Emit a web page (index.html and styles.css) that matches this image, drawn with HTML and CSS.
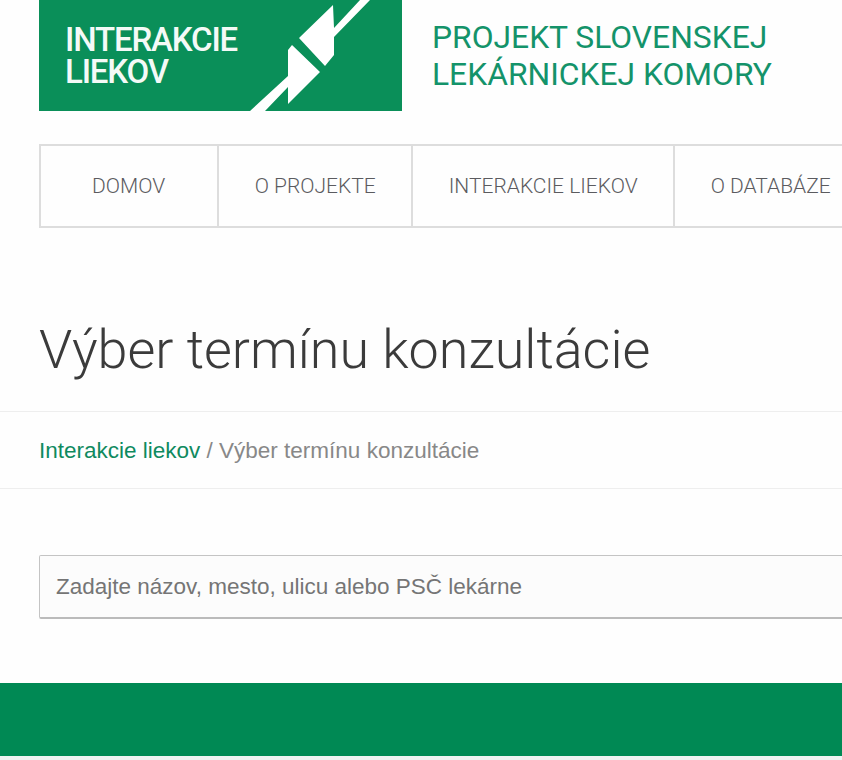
FILE: index.html
```html
<!DOCTYPE html>
<html lang="en">
<head>
  <meta charset="UTF-8">
  <meta name="viewport" content="width=device-width, initial-scale=1.0">
  <title>Výber termínu konzultácie</title>
  <link rel="stylesheet" href="styles.css">
</head>
<body>

  <!-- Header -->
  <header class="site-header">
    <a class="logo" href="#">
      <span class="logo-text">INTERAKCIE<br>LIEKOV</span>
      <svg class="logo-plug" viewBox="0 0 122 111" width="122" height="111">
        <path fill="#fff" d="M49 38 L83 5 L84 28 L110 0 L120 0 L84 37 L84 55 L75 66 Z"/>
        <path fill="#fff" d="M42 45 L70 72 L38 104 L38 87 L15 111 L0 111 L38 76 L38 50 Z"/>
      </svg>
    </a>
    <div class="tagline">PROJEKT SLOVENSKEJ<br>LEKÁRNICKEJ KOMORY</div>
  </header>

  <!-- Main Menu -->
  <nav class="main-nav">
    <a class="home-link" href="#">DOMOV</a>
    <a href="#">O PROJEKTE</a>
    <a href="#">INTERAKCIE LIEKOV</a>
    <a href="#">O DATABÁZE</a>
  </nav>

  <h1 class="page-title">Výber termínu konzultácie</h1>

  <!-- Breadcrumb -->
  <div class="breadcrumb">
    <a href="#">Interakcie liekov</a> / Výber termínu konzultácie
  </div>

  <!-- Search -->
  <form class="search-form">
    <input type="text" placeholder="Zadajte názov, mesto, ulicu alebo PSČ lekárne">
  </form>

  <div class="green-band"></div>
  <div class="page-end"></div>

</body>
</html>
```

FILE: styles.css
```css
/* Global Styles */
html,
body {
  overflow: hidden;
}

body {
  margin: 0;
  padding: 0;
  width: 842px;
  height: 760px;
  background-color: #fefefe;
  font-family: 'Roboto', sans-serif;
  color: #3b3b3b;
}

/* Header */
.site-header {
  display: flex;
  padding-left: 39px;
  height: 144px;
}

.logo {
  display: flex;
  box-sizing: border-box;
  width: 363px;
  height: 111px;
  padding: 0 30px 0 26px;
  justify-content: space-between;
  background-color: #0a8f59;
  color: #f4faf7;
  text-decoration: none;
}

.logo-text {
  margin-top: 24px;
  font-size: 33px;
  font-weight: 500;
  line-height: 32px;
  letter-spacing: -1.15px;
}

.logo-plug {
  flex-shrink: 0;
}

.tagline {
  margin: 19px 0 0 30px;
  color: #14936a;
  font-size: 31.8px;
  line-height: 37px;
  white-space: nowrap;
}

/* Main Menu */
.main-nav {
  display: flex;
  margin-left: 39px;
  width: 1000px;
  height: 84px;
  box-sizing: border-box;
  border-top: 2px solid #dddddd;
  border-bottom: 2px solid #dddddd;
  border-left: 2px solid #dddddd;
}

.main-nav a {
  display: flex;
  align-items: center;
  padding: 0 35.5px;
  border-right: 2px solid #dddddd;
  color: #5b5b5f;
  font-size: 21px;
  font-weight: 300;
  text-decoration: none;
  white-space: nowrap;
}

.main-nav .home-link {
  padding: 0 52px 0 51px;
}

/* Title */
.page-title {
  margin: 84px 0 24px 39px;
  font-size: 53.9px;
  font-weight: 300;
  line-height: 75px;
  white-space: nowrap;
}

/* Breadcrumb */
.breadcrumb {
  height: 76px;
  padding-left: 39px;
  border-top: 1px solid #eeeeee;
  border-bottom: 1px solid #eeeeee;
  color: #888888;
  font-family: 'Liberation Sans', sans-serif;
  font-size: 22.5px;
  line-height: 77px;
}

.breadcrumb a {
  color: #0f8a5f;
  text-decoration: none;
}

/* Search */
.search-form {
  margin: 66px 0 64px 39px;
}

.search-form input {
  display: block;
  box-sizing: border-box;
  width: 1000px;
  height: 64px;
  padding: 0 16px;
  border: 1px solid #c4c4c4;
  border-bottom: 2px solid #bbbbbb;
  border-radius: 2px;
  background-color: #fcfcfc;
  font-family: 'Liberation Sans', sans-serif;
  font-size: 22.5px;
}

.search-form input::placeholder {
  color: #757575;
  opacity: 1;
}

/* Footer band */
.green-band {
  height: 73px;
  background-color: #008954;
}

.page-end {
  height: 4px;
  background-color: #eef3f2;
}
```
